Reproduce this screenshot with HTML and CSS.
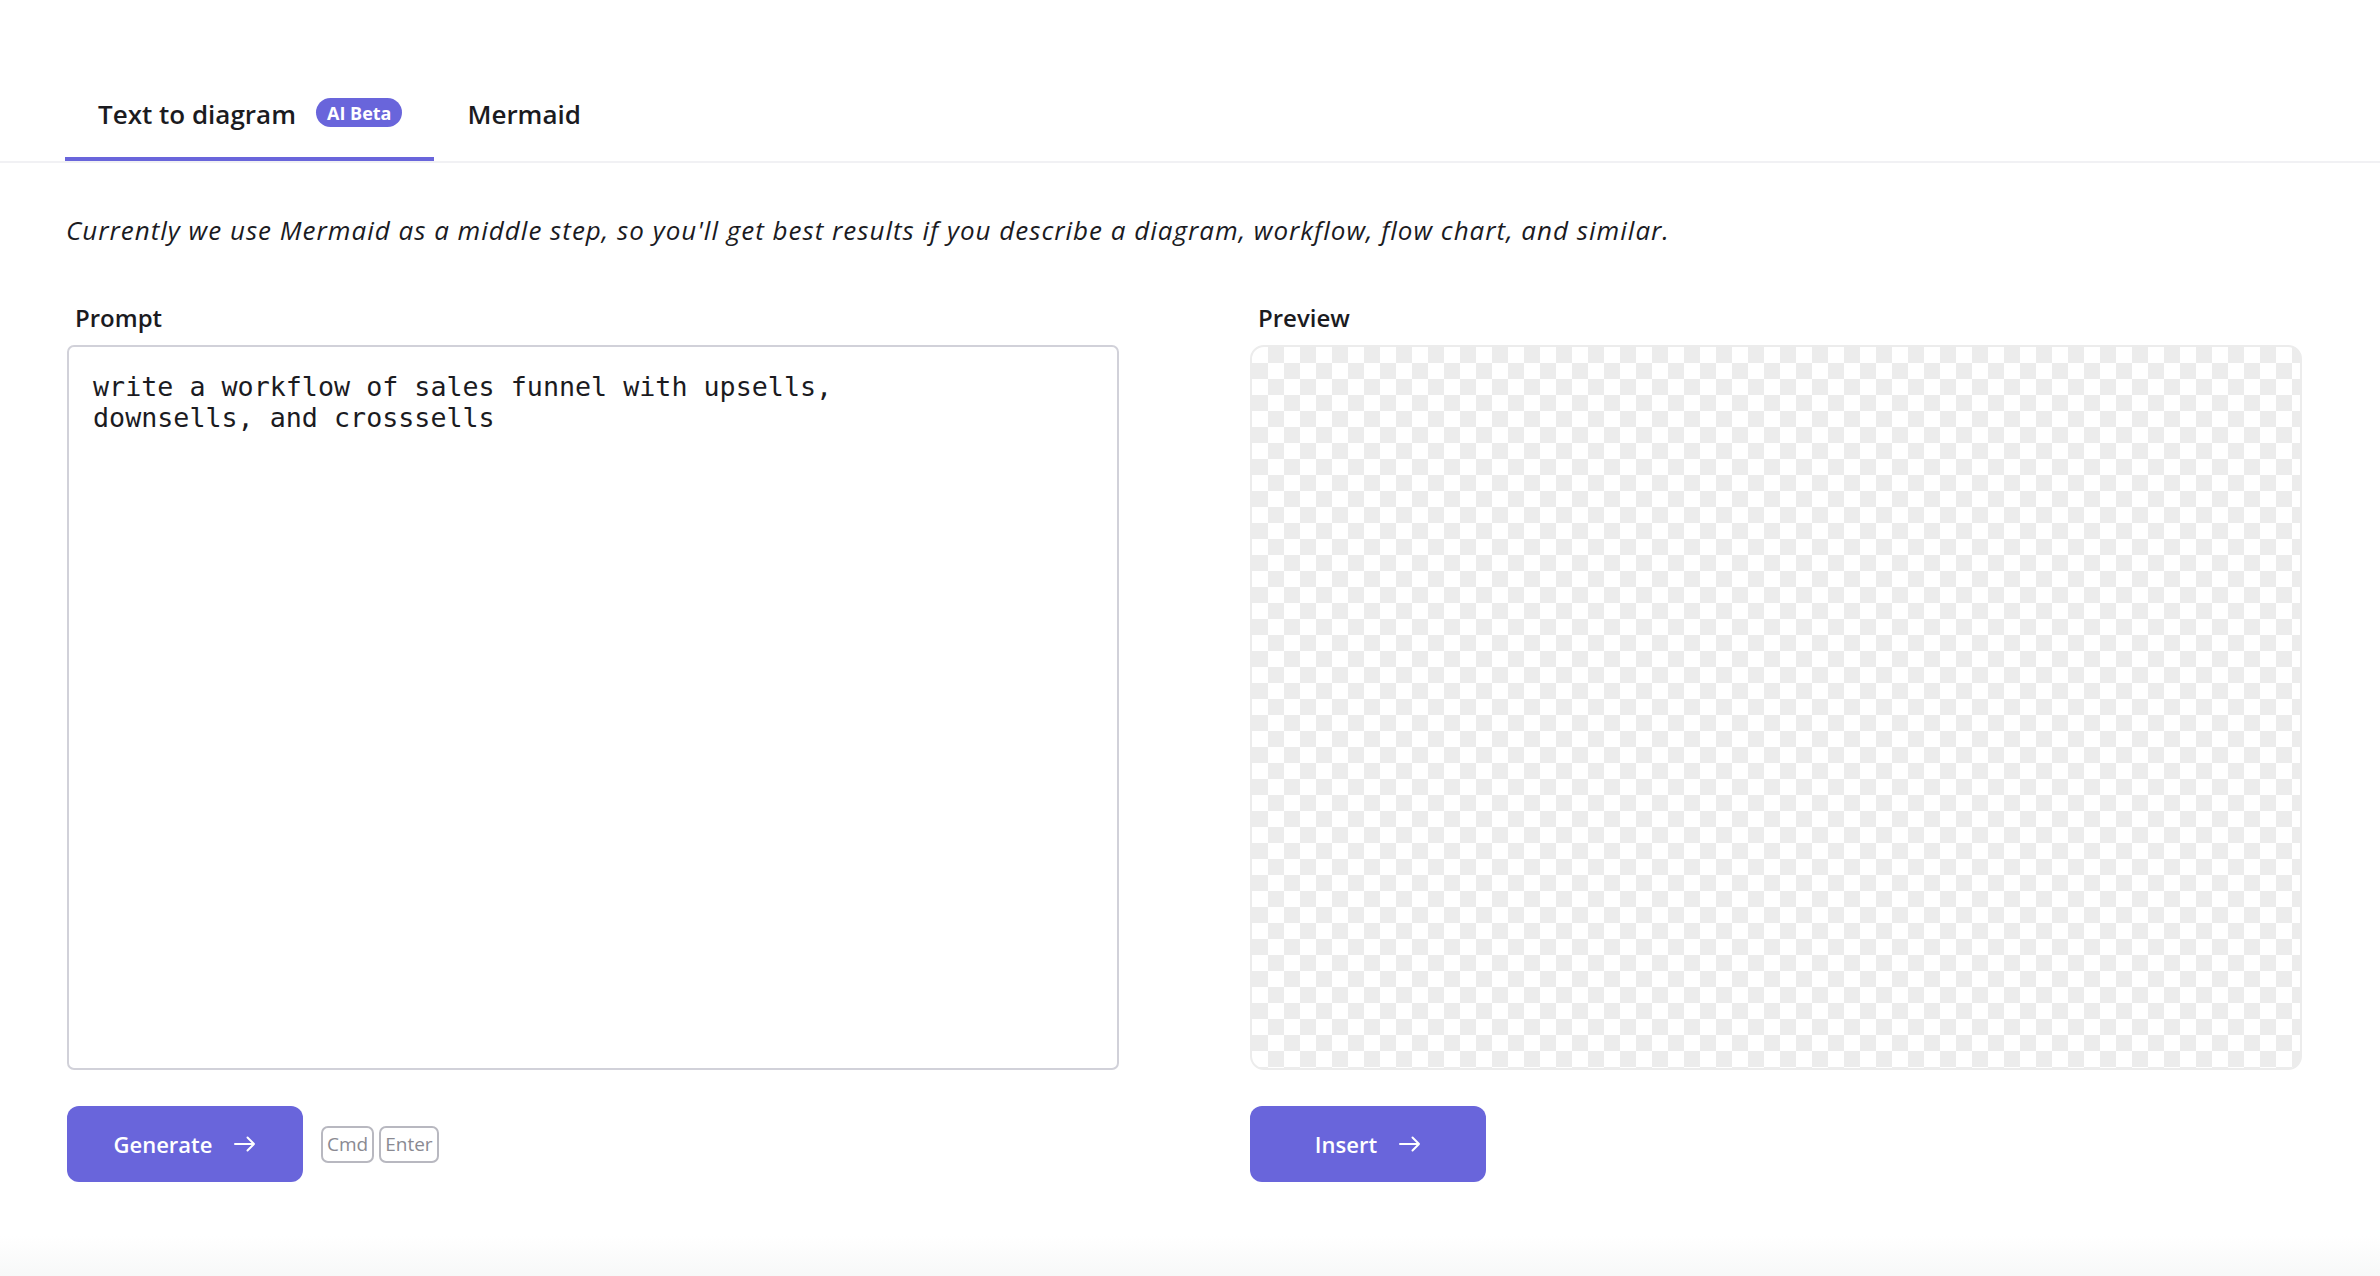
FILE: index.html
```html
<!DOCTYPE html>
<html lang="en">
<head>
  <meta charset="UTF-8" />
  <title>Text to diagram</title>
  <link rel="stylesheet" href="styles.css">
</head>

<body>
  <!-- ===========  TABS  =========== -->
  <nav class="tabs">
    <div class="tab active">
      <span>Text to diagram</span>
      <span class="badge">AI Beta</span>
    </div>
    <div class="tab">
      <span>Mermaid</span>
    </div>
  </nav>

  <!-- ===========  PANEL  =========== -->
  <main class="panel">
    <p class="intro">Currently we use Mermaid as a middle step, so you'll get best results if you describe a diagram, workflow, flow chart, and similar.</p>

    <div class="columns">
      <section class="col">
        <label class="label" for="prompt">Prompt</label>
        <textarea id="prompt" class="prompt">write a workflow of sales funnel with upsells,
downsells, and crosssells</textarea>
        <div class="actions">
          <button class="btn">
            Generate
            <svg class="arrow" viewBox="0 0 22 16" width="22" height="16">
              <path d="M1 8h19M13.5 1.5 20 8l-6.5 6.5" />
            </svg>
          </button>
          <span class="keys">
            <kbd>Cmd</kbd><kbd>Enter</kbd>
          </span>
        </div>
      </section>

      <section class="col">
        <div class="label">Preview</div>
        <div class="preview"></div>
        <div class="actions">
          <button class="btn">
            Insert
            <svg class="arrow" viewBox="0 0 22 16" width="22" height="16">
              <path d="M1 8h19M13.5 1.5 20 8l-6.5 6.5" />
            </svg>
          </button>
        </div>
      </section>
    </div>
  </main>
</body>
</html>
```

FILE: styles.css
```css
:root{
  --primary:#6965db;
  --text:#1b1b1f;
  --line:#d1d1d9;
  --checker:#ececec;
}
*{box-sizing:border-box;}

html{
  background:linear-gradient(to bottom,#fff calc(100% - 40px),#f7f8f8 100%);
  min-height:100%;
}
body{
  margin:0;
  min-height:1276px;
  font-family:"Open Sans",sans-serif;
  color:var(--text);
}

/* ---- tabs ---- */
.tabs{
  display:flex;
  padding-left:65px;
  border-bottom:2px solid #f1f1f4;
}
.tab{
  display:flex;
  align-items:center;
  gap:20px;
  padding:97px 32px 25px 33px;
  font-size:26px;
  font-weight:600;
  line-height:35px;
  border-bottom:4px solid transparent;
}
.tab.active{ border-bottom-color:var(--primary); }
.badge{
  display:inline-flex;
  align-items:center;
  height:29px;
  padding:0 11px;
  border-radius:15px;
  background:var(--primary);
  color:#fff;
  font-size:18px;
  font-weight:700;
  line-height:1;
  margin-top:-4px;
}

/* ---- panel ---- */
.panel{ padding:0 78px 0 66px; }
.intro{
  margin:50px 0 53px;
  font-size:26px;
  font-style:italic;
  letter-spacing:1px;
  line-height:35px;
}
.columns{
  display:grid;
  grid-template-columns:1fr 1fr;
  column-gap:130px;
}
.col{ display:flex; flex-direction:column; }
.label{
  display:block;
  padding-left:9px;
  font-size:24px;
  font-weight:600;
  margin-bottom:11px;
}
.prompt{
  height:725px;
  margin:0 0 0 1px;
  padding:24px;
  border:2px solid var(--line);
  border-radius:7px;
  resize:none;
  font-family:"DejaVu Sans Mono",monospace;
  font-size:26.7px;
  line-height:31px;
  color:var(--text);
  outline:none;
}
.preview{
  height:725px;
  margin-left:1px;
  border:2px solid var(--checker);
  border-radius:14px;
  background:repeating-conic-gradient(var(--checker) 0 25%,#fff 0 50%) 0 0/32px 32px;
}

/* ---- buttons ---- */
.actions{
  display:flex;
  align-items:center;
  gap:18px;
  margin-top:36px;
}
.btn{
  display:inline-flex;
  align-items:center;
  justify-content:center;
  gap:22px;
  width:236px;
  height:76px;
  margin-left:1px;
  border:none;
  border-radius:12px;
  background:var(--primary);
  color:#fff;
  font-family:"Open Sans",sans-serif;
  font-size:22px;
  font-weight:600;
}
.arrow{
  fill:none;
  stroke:#fff;
  stroke-width:2;
  stroke-linecap:round;
  stroke-linejoin:round;
}
.keys{ display:flex; gap:5px; }
kbd{
  display:inline-flex;
  align-items:center;
  height:37px;
  padding:0 4px;
  border:2px solid #b8b8c0;
  border-radius:7px;
  font-family:"Open Sans",sans-serif;
  font-size:19px;
  color:#8a8a92;
}
```
